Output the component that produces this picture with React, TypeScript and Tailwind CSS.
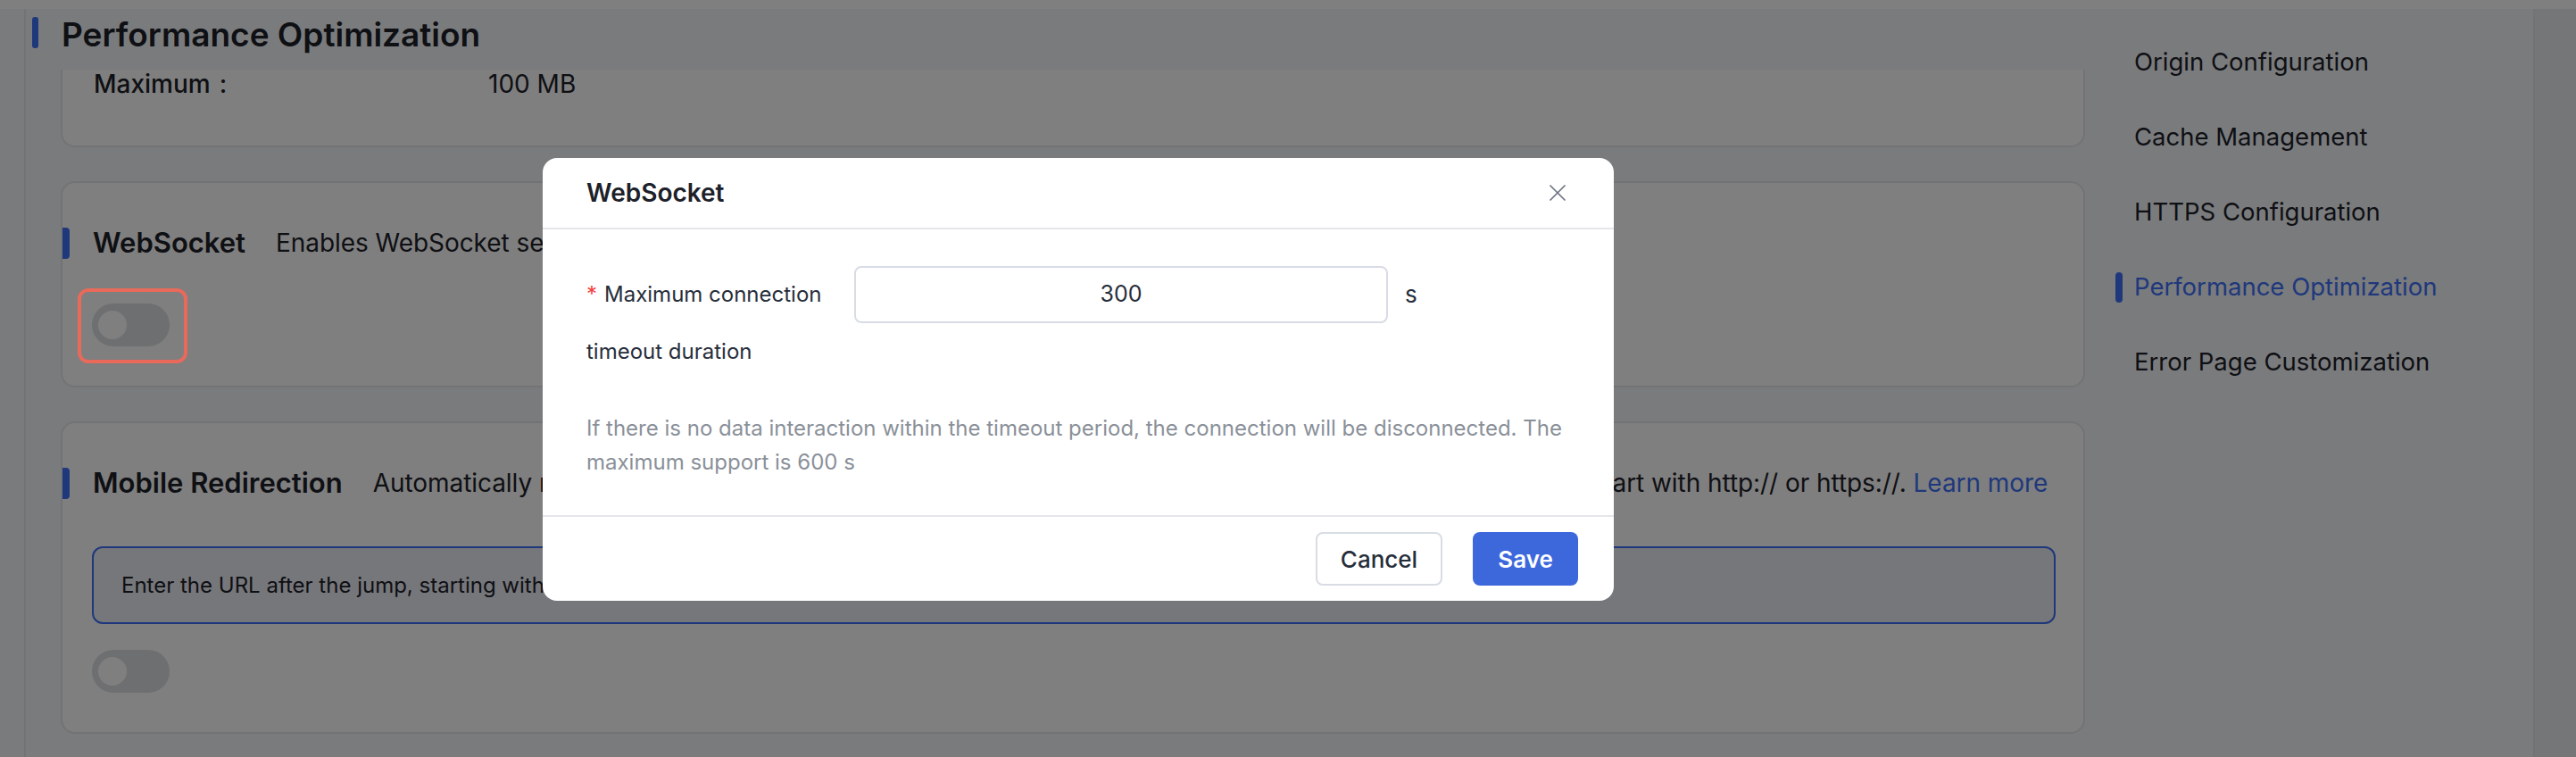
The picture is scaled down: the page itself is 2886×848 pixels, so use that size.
import React from "react";

function Toggle() {
  return (
    <div className="flex h-[48px] w-[87px] items-center rounded-full bg-[#dcdee2] pl-[7px]">
      <div className="h-[32px] w-[32px] rounded-full bg-white" />
    </div>
  );
}

function SectionTitle({ title, children }: { title: string; children?: React.ReactNode }) {
  return (
    <div className="flex h-[42px] items-center">
      <div className="-ml-[34px] mr-[26px] h-[35px] w-[8px] rounded-r-[4px] bg-[#3e71f8]" />
      <div className="mr-[34px] whitespace-nowrap text-[31px] font-semibold leading-[42px] text-[#1d2129]">{title}</div>
      <div className="whitespace-nowrap text-[28px] leading-[42px] tracking-[-0.06px] text-[#1d2129]">{children}</div>
    </div>
  );
}

const navItems = [
  "Origin Configuration",
  "Cache Management",
  "HTTPS Configuration",
  "Performance Optimization",
  "Error Page Customization",
];

export default function App() {
  return (
    <div className="relative h-[848px] w-[2886px] overflow-hidden bg-[#f4f6fa] font-['Inter','Noto_Sans',sans-serif] text-[#1d2129]">
      <div className="h-[10px] bg-white" />
      <div className="flex h-[838px]">
        <div className="w-[29px] shrink-0 border-r-2 border-[#e6e8ec] bg-[#f4f6fa]" />
        <div className="flex min-w-0 flex-1">
          {/* main column */}
          <div className="flex w-[2307px] shrink-0 flex-col">
            <div className="flex h-[68px] shrink-0 items-start pl-[7px] pt-[9px]">
              <div className="h-[35px] w-[7px] rounded-[3px] bg-[#3e71f8]" />
              <div className="ml-[26px] mt-[1px] whitespace-nowrap text-[37px] font-semibold leading-[37px] text-[#1d2129]">
                Performance Optimization
              </div>
            </div>
            <div className="flex flex-col gap-[38px] pl-[39px]">
              {/* card 1 (scrolled) */}
              <div className="flex h-[87px] rounded-b-[16px] border-2 border-t-0 border-[#e5e6eb] bg-white pl-[35px]">
                <div className="flex h-[32px] items-center text-[28px] leading-[32px]">
                  <span className="flex w-[442px] font-medium">
                    Maximum<span className="ml-[10px]">:</span>
                  </span>
                  <span>100 MB</span>
                </div>
              </div>
              {/* card 2 */}
              <div className="flex h-[231px] flex-col rounded-[16px] border-2 border-[#e5e6eb] bg-white pl-[34px] pr-[31px] pt-[46px]">
                <SectionTitle title="WebSocket">Enables WebSocket service.</SectionTitle>
                <div className="mt-[47px] -ml-[1px]">
                  <Toggle />
                </div>
              </div>
              {/* card 3 */}
              <div className="flex h-[350px] flex-col rounded-[16px] border-2 border-[#e5e6eb] bg-white pl-[34px] pr-[31px] pt-[46px]">
                <SectionTitle title="Mobile Redirection">
                  Automatically redirects requests from mobile users to the specified address. The redirect address must start with http:// or https://.{" "}
                  <span className="text-[#3e71f8]">Learn more</span>
                </SectionTitle>
                <div className="-ml-[1px] mt-[50px] flex h-[87px] items-center rounded-[12px] border-2 border-[#3e71f8] bg-[#eceef6] pl-[31px] text-[24px] text-[#1d2129]">
                  Enter the URL after the jump, starting with http:// or https://
                </div>
                <div className="-ml-[1px] mt-[29px]">
                  <Toggle />
                </div>
              </div>
            </div>
          </div>
          {/* right nav */}
          <div className="flex flex-1 flex-col pt-[18px]">
            {navItems.map((item) => {
              const active = item === "Performance Optimization";
              return (
                <div key={item} className="flex h-[84px] items-center pl-[34px]">
                  <div className={active ? "h-[34px] w-[8px] rounded-[4px] bg-[#3e71f8]" : "h-[34px] w-[8px]"} />
                  <div className={active ? "ml-[13px] whitespace-nowrap text-[27.5px] text-[#3e71f8]" : "ml-[13px] whitespace-nowrap text-[27.5px] text-[#1d2129]"}>
                    {item}
                  </div>
                </div>
              );
            })}
          </div>
        </div>
        <div className="w-[48px] shrink-0 border-l-2 border-[#e4e6ea] bg-[#eaecf0]" />
      </div>

      {/* mask */}
      <div className="absolute inset-0 bg-black/50" />

      {/* modal */}
      <div className="absolute left-[608px] top-[177px] flex h-[496px] w-[1200px] flex-col rounded-[16px] bg-white">
        <div className="flex h-[80px] shrink-0 items-center justify-between border-b-2 border-[#e5e6eb] pl-[49px] pr-[54px]">
          <div className="text-[28px] font-semibold text-[#1d2129]">WebSocket</div>
          <svg width="18" height="18" viewBox="0 0 18 18" fill="none">
            <path d="M1 1L17 17M17 1L1 17" stroke="#6b7280" strokeWidth="1.7" strokeLinecap="round" />
          </svg>
        </div>
        <div className="flex h-[320px] shrink-0 flex-col px-[49px] pt-[41px]">
          <div className="flex items-start">
            <div className="w-[300px] shrink-0 pr-[24px] text-[24px] leading-[64px] text-[#272e3b]">
              <span className="mr-[8px] text-[#f53f3f]">*</span>Maximum connection timeout duration
            </div>
            <div className="flex h-[64px] w-[598px] items-center justify-center rounded-[8px] border-2 border-[#d8dce5] text-[25px] text-[#272e3b]">
              300
            </div>
            <div className="ml-[19px] text-[26px] leading-[64px] text-[#272e3b]">s</div>
          </div>
          <div className="mt-[35px] text-[24px] leading-[38px] text-[#8a9099]">
            If there is no data interaction within the timeout period, the connection will be disconnected. The maximum support is 600 s
          </div>
        </div>
        <div className="flex flex-1 items-center justify-end gap-[34px] border-t-2 border-[#e5e6eb] pr-[40px]">
          <div className="flex h-[60px] w-[142px] items-center justify-center rounded-[8px] border-2 border-[#d8dce5] text-[26px] font-medium text-[#272e3b]">
            Cancel
          </div>
          <div className="flex h-[60px] w-[118px] items-center justify-center rounded-[8px] bg-[#3d68dc] text-[26px] font-semibold text-white">
            Save
          </div>
        </div>
      </div>

      {/* annotation */}
      <div className="absolute left-[87px] top-[323px] h-[84px] w-[123px] rounded-[12px] border-4 border-[#e9695b]" />
    </div>
  );
}
